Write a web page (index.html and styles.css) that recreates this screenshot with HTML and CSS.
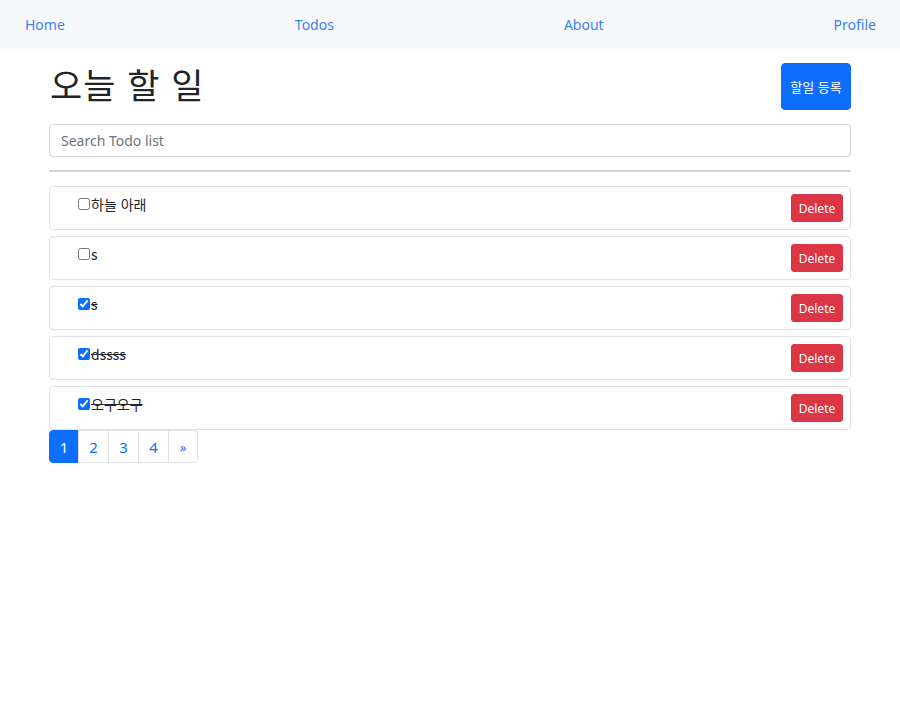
FILE: index.html
```html
<!DOCTYPE html>
<html lang="ko">
<head>
<meta charset="utf-8">
<title>Todos</title>
<link rel="stylesheet" href="styles.css">
</head>
<body>
<nav class="navbar">
  <a class="nav-link" href="#">Home</a>
  <a class="nav-link" href="#">Todos</a>
  <a class="nav-link" href="#">About</a>
  <a class="nav-link" href="#">Profile</a>
</nav>
<main class="container">
  <div class="header">
    <h1 class="title">오늘 할 일</h1>
    <button class="btn-primary">할일 등록</button>
  </div>
  <input class="search" type="text" placeholder="Search Todo list">
  <hr class="divider">
  <ul class="todo-list">
    <li class="todo"><label class="todo-label"><input type="checkbox"><span>하늘 아래</span></label><button class="btn-danger">Delete</button></li>
    <li class="todo"><label class="todo-label"><input type="checkbox"><span>s</span></label><button class="btn-danger">Delete</button></li>
    <li class="todo"><label class="todo-label"><input type="checkbox" checked><span class="done">s</span></label><button class="btn-danger">Delete</button></li>
    <li class="todo"><label class="todo-label"><input type="checkbox" checked><span class="done">dssss</span></label><button class="btn-danger">Delete</button></li>
    <li class="todo"><label class="todo-label"><input type="checkbox" checked><span class="done">오구오구</span></label><button class="btn-danger">Delete</button></li>
  </ul>
  <ul class="pagination">
    <li class="page active">1</li>
    <li class="page">2</li>
    <li class="page">3</li>
    <li class="page">4</li>
    <li class="page small">»</li>
  </ul>
</main>
</body>
</html>
```
FILE: styles.css
```css
* { box-sizing: border-box; }
body {
  margin: 0;
  font-family: "Noto Sans", "Noto Sans CJK KR", sans-serif;
  color: #212529;
  background: #fff;
}
.navbar {
  display: flex;
  justify-content: space-between;
  align-items: center;
  height: 49px;
  padding: 0 24px 0 25px;
  background: #f8f9fa;
}
.nav-link {
  color: #3b82f6;
  text-decoration: none;
  font-size: 14px;
  margin-top: -1px;
}
.container {
  width: 802px;
  margin: 0 auto;
  padding-top: 14px;
}
.header {
  display: flex;
  justify-content: space-between;
  align-items: center;
}
.title {
  margin: 0;
  font-family: "Noto Sans CJK KR", sans-serif;
  font-weight: 400;
  font-size: 35px;
  letter-spacing: 1px;
  line-height: 40px;
  padding-left: 1px;
  margin-top: -5px;
}
.btn-primary {
  width: 70px;
  height: 47px;
  border: 1px solid #0d6efd;
  background: #0d6efd;
  color: #fff;
  border-radius: 4px;
  font-family: "Noto Sans CJK KR", sans-serif;
  font-size: 13px;
  padding: 0;
}
.search {
  display: block;
  width: 100%;
  height: 33px;
  margin-top: 14px;
  border: 1px solid #ced4da;
  border-radius: 4px;
  padding: 0 11px;
  font-family: "Noto Sans", "Noto Sans CJK KR", sans-serif;
  font-size: 14px;
  color: #212529;
}
.search::placeholder { color: #6c757d; }
.divider {
  margin: 13px 0 14px;
  border: 0;
  border-top: 2px solid #d5d5d5;
}
.todo-list {
  list-style: none;
  margin: 0;
  padding: 0;
  display: flex;
  flex-direction: column;
  gap: 6px;
}
.todo {
  display: flex;
  justify-content: space-between;
  align-items: center;
  height: 44px;
  border: 1px solid #dee2e6;
  border-radius: 4px;
  padding: 0 7px 0 28px;
}
.todo-label {
  display: flex;
  align-items: center;
  font-family: "Noto Sans CJK KR", sans-serif;
  font-size: 14px;
  margin-top: -8px;
}
.todo-label input {
  width: 12px;
  height: 12px;
  margin: 0 1px 0 0;
  accent-color: #0d6efd;
}
.done { text-decoration: line-through; }
.btn-danger {
  height: 28px;
  width: 52px;
  background: #dc3545;
  border: 1px solid #dc3545;
  color: #fff;
  border-radius: 3px;
  font-family: "Noto Sans", sans-serif;
  font-size: 12px;
  padding: 0;
}
.pagination {
  list-style: none;
  margin: 0;
  padding: 0;
  display: flex;
}
.page {
  width: 31px;
  height: 33px;
  display: flex;
  align-items: center;
  justify-content: center;
  border: 1px solid #dee2e6;
  margin-left: -1px;
  color: #0d6efd;
  font-size: 15px;
}
.page:first-child { margin-left: 0; width: 30px; border-radius: 4px 0 0 4px; }
.page:last-child { width: 30px; border-radius: 0 4px 4px 0; }
.page.active { background: #0d6efd; border-color: #0d6efd; color: #fff; }
.page.small { font-size: 13px; }
```
